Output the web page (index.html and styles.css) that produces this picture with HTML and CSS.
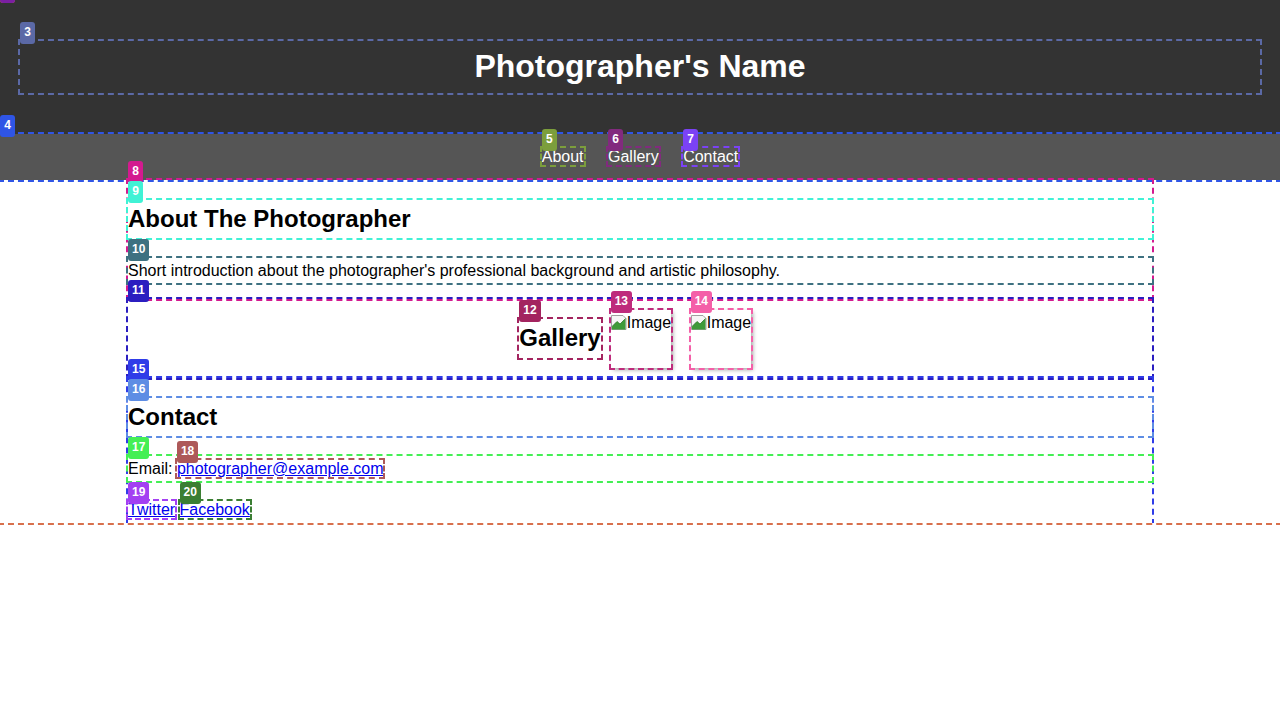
FILE: index.html
```html
<!DOCTYPE html>
<html lang="en">
<head>
<meta charset="utf-8">
<title>Photographer's Name</title>
<link rel="stylesheet" href="styles.css">
</head>
<body class="mark mark-1">
<span class="badge">1</span>
<header class="site-header mark mark-2">
  <span class="badge">2</span>
  <h1 class="site-title mark mark-3"><span class="badge">3</span>Photographer's Name</h1>
</header>
<nav class="site-nav mark mark-4">
  <span class="badge">4</span>
  <a href="#about" class="nav-link mark mark-5"><span class="badge">5</span>About</a>
  <a href="#gallery" class="nav-link mark mark-6"><span class="badge">6</span>Gallery</a>
  <a href="#contact" class="nav-link mark mark-7"><span class="badge">7</span>Contact</a>
</nav>
<section id="about" class="section mark mark-8">
  <span class="badge">8</span>
  <h2 class="section-title mark mark-9"><span class="badge">9</span>About The Photographer</h2>
  <p class="text mark mark-10"><span class="badge">10</span>Short introduction about the photographer's professional background and artistic philosophy.</p>
</section>
<section id="gallery" class="section gallery mark mark-11">
  <span class="badge">11</span>
  <h2 class="section-title mark mark-12"><span class="badge">12</span>Gallery</h2>
  <div class="photo mark mark-13"><span class="badge">13</span><div class="photo-inner"><svg class="broken" width="16" height="16" viewBox="0 0 16 16" aria-hidden="true"><path d="M0.5 1.5h11.5l3 3v11h-14.5z" fill="#f6f6f6" stroke="#a0a0a0"/><path d="M1 15.5v-3l5-5 3 2.5 5.5-5.5v11z" fill="#3f9a3a"/><path d="M1 12.5l5-5 3 2.5 5.5-5.5" fill="none" stroke="#2c7a2a" stroke-width="0.8"/></svg>Image</div></div>
  <div class="photo mark mark-14"><span class="badge">14</span><div class="photo-inner"><svg class="broken" width="16" height="16" viewBox="0 0 16 16" aria-hidden="true"><path d="M0.5 1.5h11.5l3 3v11h-14.5z" fill="#f6f6f6" stroke="#a0a0a0"/><path d="M1 15.5v-3l5-5 3 2.5 5.5-5.5v11z" fill="#3f9a3a"/><path d="M1 12.5l5-5 3 2.5 5.5-5.5" fill="none" stroke="#2c7a2a" stroke-width="0.8"/></svg>Image</div></div>
</section>
<section id="contact" class="section mark mark-15">
  <span class="badge">15</span>
  <h2 class="section-title mark mark-16"><span class="badge">16</span>Contact</h2>
  <p class="text mark mark-17"><span class="badge">17</span>Email: <a href="mailto:photographer@example.com" class="link mark mark-18"><span class="badge">18</span>photographer@example.com</a></p>
  <a href="#" class="link mark mark-19"><span class="badge">19</span>Twitter</a>
  <a href="#" class="link mark mark-20"><span class="badge">20</span>Facebook</a>
</section>
</body>
</html>
```
FILE: styles.css
```css
html {
  background: #fff;
}

body {
  margin: 0;
  font-family: "Liberation Sans", Arial, sans-serif;
  font-size: 16px;
  line-height: 1.6;
  color: #000;
}

/* debug outlines and badges */
.mark {
  position: relative;
  outline: 2px dashed var(--mark);
}

.badge {
  position: absolute;
  top: -19px;
  left: 0;
  z-index: 5;
  height: 22px;
  min-width: 7px;
  padding: 0 4px;
  border-radius: 3px;
  background: var(--mark);
  color: #fff;
  font-family: "Liberation Sans", Arial, sans-serif;
  font-size: 12px;
  font-weight: bold;
  line-height: 20px;
  text-align: center;
  text-decoration: none;
  white-space: nowrap;
}

.mark-1 { --mark: #d8704c; }
.mark-2 { --mark: #7b1fa2; }
.mark-3 { --mark: #5b69a6; }
.mark-4 { --mark: #2f55e6; }
.mark-5 { --mark: #7c9e3c; }
.mark-6 { --mark: #822a7e; }
.mark-7 { --mark: #7b42f5; }
.mark-8 { --mark: #d31a8f; }
.mark-9 { --mark: #40f2d5; }
.mark-10 { --mark: #3e7181; }
.mark-11 { --mark: #2b1ec0; }
.mark-12 { --mark: #a3245f; }
.mark-13 { --mark: #be2b7c; }
.mark-14 { --mark: #f45fa8; }
.mark-15 { --mark: #2f3ce8; }
.mark-16 { --mark: #5e8de4; }
.mark-17 { --mark: #44ef55; }
.mark-18 { --mark: #ad5959; }
.mark-19 { --mark: #a340f2; }
.mark-20 { --mark: #3b7e33; }

/* header */
.site-header {
  background: #333;
  color: #fff;
  padding: 20px;
  text-align: center;
}

.site-title {
  margin: 0.67em 0;
  font-size: 32px;
  font-weight: bold;
}

/* nav */
.site-nav {
  background: #555;
  padding: 10px;
  text-align: center;
}

.nav-link {
  color: #fff;
  text-decoration: none;
  margin: 0 10px;
}

/* sections */
.section {
  display: flow-root;
  max-width: 1024px;
  margin: 0 auto;
}

.section-title {
  margin: 0.83em 0;
  font-size: 24px;
  font-weight: bold;
}

.text {
  margin: 16px 0;
}

.link {
  color: #0000ee;
  text-decoration: underline;
}

/* gallery */
.gallery {
  display: flex;
  flex-wrap: wrap;
  justify-content: center;
  align-items: center;
}

.photo {
  width: 60px;
  height: 58px;
  margin: 10px;
  background: #fff;
  box-shadow: 2px 2px 4px rgba(0, 0, 0, 0.35);
}

.photo-inner {
  width: 100%;
  height: 100%;
  overflow: hidden;
  white-space: nowrap;
}

.broken {
  vertical-align: -2px;
}
```
